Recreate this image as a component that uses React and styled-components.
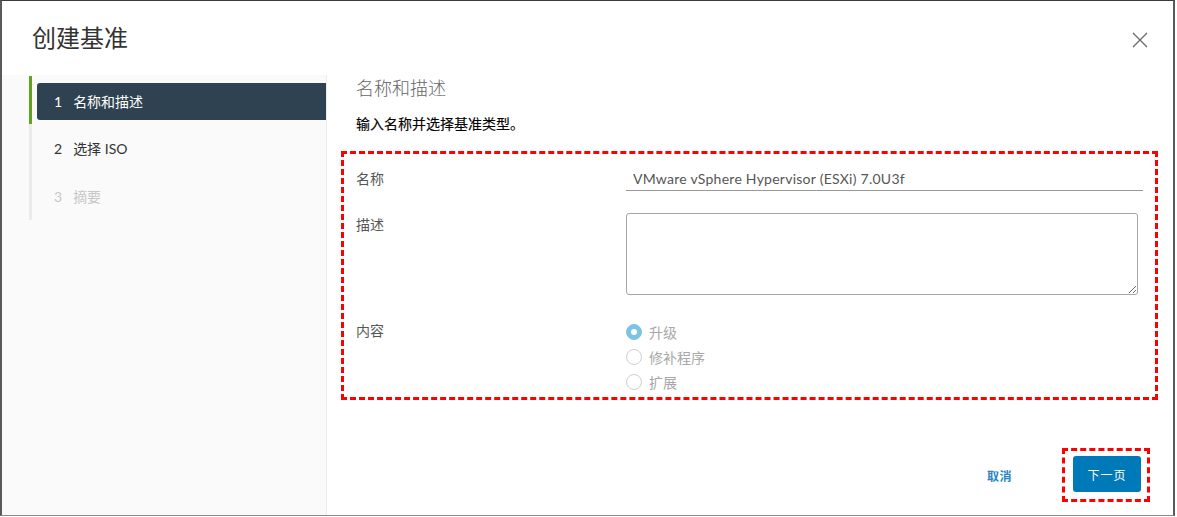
import styled, { createGlobalStyle } from "styled-components";
import { useState } from "react";

const GlobalStyle = createGlobalStyle`
  html, body {
    margin: 0;
    padding: 0;
    background: #ffffff;
  }
  * {
    box-sizing: border-box;
  }
  body {
    font-family: Lato, "Noto Sans CJK SC", "Noto Sans", sans-serif;
    color: #333;
  }
`;

const Dialog = styled.div`
  width: 1175px;
  height: 516px;
  display: flex;
  flex-direction: column;
  background: #fff;
  border-top: 1px solid #3a3a3a;
  border-left: 2px solid #5a5a5a;
  border-right: 2px solid #5a5a5a;
  border-bottom: 1px solid #8a8a8a;
`;

const Header = styled.div`
  height: 74px;
  flex-shrink: 0;
  display: flex;
  align-items: flex-start;
  justify-content: space-between;
  padding: 21px 22px 0 30px;
`;

const Title = styled.h1`
  margin: 0;
  font-size: 24px;
  line-height: 32px;
  font-weight: 400;
  color: #333;
`;

const CloseButton = styled.button`
  width: 22px;
  height: 22px;
  margin-top: 7px;
  padding: 0;
  border: none;
  background: none;
  display: flex;
  align-items: center;
  justify-content: center;
  cursor: pointer;
`;

const Body = styled.div`
  flex: 1;
  display: flex;
  min-height: 0;
`;

const Nav = styled.nav`
  width: 325px;
  flex-shrink: 0;
  background: #fafafa;
  border-right: 1px solid #ececec;
  padding: 1px 0 0 27px;
`;

const StepList = styled.ol`
  list-style: none;
  margin: 0;
  padding: 0;
`;

const Step = styled.li`
  height: 48px;
  display: flex;
  align-items: center;
  padding-left: 5px;
  border-left: 3px solid ${(p) => (p.$active ? "#62a420" : "#ebebeb")};
`;

const StepLabel = styled.div`
  flex: 1;
  height: 37px;
  display: flex;
  align-items: center;
  gap: 11px;
  padding-left: 17px;
  border-radius: 3px 0 0 3px;
  font-size: 14px;
  background: ${(p) => (p.$active ? "#2f4251" : "transparent")};
  color: ${(p) => (p.$active ? "#fff" : p.$disabled ? "#c8c8c8" : "#333")};
  margin-top: ${(p) => (p.$active ? "2px" : "0")};
`;

const Content = styled.div`
  flex: 1;
  display: flex;
  flex-direction: column;
  padding: 1px 18px 13px 14px;
`;

const PageTitle = styled.h2`
  margin: 0 0 0 15px;
  font-size: 18px;
  line-height: 24px;
  font-weight: 300;
  color: #666;
`;

const Subtitle = styled.p`
  margin: 14px 0 0 15px;
  font-size: 14px;
  line-height: 20px;
  font-weight: 400;
  color: #000;
  -webkit-text-stroke: 0.15px #000;
`;

const Highlight = styled.div`
  border: 3px dashed #f00;
  padding: ${(p) => p.$pad};
`;

const FormBox = styled(Highlight)`
  margin-top: 17px;
  display: grid;
  grid-template-columns: 270px 1fr;
  row-gap: 22px;
  align-items: start;
`;

const Label = styled.label`
  font-size: 14px;
  line-height: 20px;
  color: #565656;
  padding-top: ${(p) => p.$top || "0"};
`;

const TextInput = styled.input`
  width: 517px;
  height: 24px;
  border: none;
  border-bottom: 1px solid #9a9a9a;
  padding: 0 7px;
  font-family: inherit;
  font-size: 14px;
  letter-spacing: 0.25px;
  color: #565656;
  background: transparent;
  outline: none;
`;

const TextArea = styled.textarea`
  display: block;
  width: 512px;
  height: 82px;
  border: 1px solid #a6a6a6;
  border-radius: 3px;
  font-family: inherit;
  font-size: 14px;
  resize: both;
  outline: none;
`;

const RadioGroup = styled.div`
  display: flex;
  flex-direction: column;
  gap: 8px;
  padding-top: 6px;
`;

const RadioRow = styled.label`
  display: flex;
  align-items: center;
  gap: 7px;
  height: 17px;
  font-size: 14px;
  color: #a8a8a8;
`;

const RadioDot = styled.span`
  width: 16px;
  height: 16px;
  border-radius: 50%;
  flex-shrink: 0;
  background: ${(p) => (p.$checked ? "#7cc4e4" : "#fff")};
  border: 1px solid ${(p) => (p.$checked ? "#7cc4e4" : "#cfcfcf")};
  display: flex;
  align-items: center;
  justify-content: center;
  &::after {
    content: "";
    width: 6px;
    height: 6px;
    border-radius: 50%;
    background: ${(p) => (p.$checked ? "#fff" : "transparent")};
  }
`;

const Footer = styled.div`
  margin-top: auto;
  display: flex;
  align-items: center;
  justify-content: flex-end;
  gap: 38px;
  padding-right: 8px;
`;

const FlatButton = styled.button`
  border: none;
  background: none;
  padding: 0 12px;
  height: 36px;
  font-family: inherit;
  font-size: 12px;
  font-weight: 600;
  letter-spacing: 0.5px;
  color: #2b86bf;
  cursor: pointer;
`;

const PrimaryButton = styled.button`
  width: 68px;
  height: 36px;
  border: none;
  border-radius: 3px;
  background: #0079b8;
  color: #fff;
  font-family: inherit;
  font-size: 12px;
  letter-spacing: 1px;
  cursor: pointer;
`;

const steps = [
  { n: 1, label: "名称和描述", active: true },
  { n: 2, label: "选择 ISO" },
  { n: 3, label: "摘要", disabled: true },
];

const contentTypes = ["升级", "修补程序", "扩展"];

function App() {
  const [name, setName] = useState("VMware vSphere Hypervisor (ESXi) 7.0U3f");
  const [description, setDescription] = useState("");
  const [type, setType] = useState("升级");

  return (
    <>
      <GlobalStyle />
      <Dialog>
        <Header>
          <Title>创建基准</Title>
          <CloseButton aria-label="关闭">
            <svg width="16" height="16" viewBox="0 0 16 16">
              <path
                d="M1 1 L15 15 M15 1 L1 15"
                stroke="#6f6f6f"
                strokeWidth="1.4"
                fill="none"
              />
            </svg>
          </CloseButton>
        </Header>
        <Body>
          <Nav>
            <StepList>
              {steps.map((s) => (
                <Step key={s.n} $active={s.active}>
                  <StepLabel $active={s.active} $disabled={s.disabled}>
                    <span>{s.n}</span>
                    <span>{s.label}</span>
                  </StepLabel>
                </Step>
              ))}
            </StepList>
          </Nav>
          <Content>
            <PageTitle>名称和描述</PageTitle>
            <Subtitle>输入名称并选择基准类型。</Subtitle>
            <FormBox $pad="13px 12px 7px 12px">
              <Label htmlFor="name" $top="2px">名称</Label>
              <TextInput
                id="name"
                value={name}
                onChange={(e) => setName(e.target.value)}
              />
              <Label htmlFor="desc" $top="2px">描述</Label>
              <TextArea
                id="desc"
                value={description}
                onChange={(e) => setDescription(e.target.value)}
              />
              <Label $top="4px">内容</Label>
              <RadioGroup>
                {contentTypes.map((t) => (
                  <RadioRow key={t} onClick={() => setType(t)}>
                    <RadioDot $checked={type === t} />
                    {t}
                  </RadioRow>
                ))}
              </RadioGroup>
            </FormBox>
            <Footer>
              <FlatButton>取消</FlatButton>
              <Highlight $pad="5px 6px 7px 8px">
                <PrimaryButton>下一页</PrimaryButton>
              </Highlight>
            </Footer>
          </Content>
        </Body>
      </Dialog>
    </>
  );
}

export default App;
